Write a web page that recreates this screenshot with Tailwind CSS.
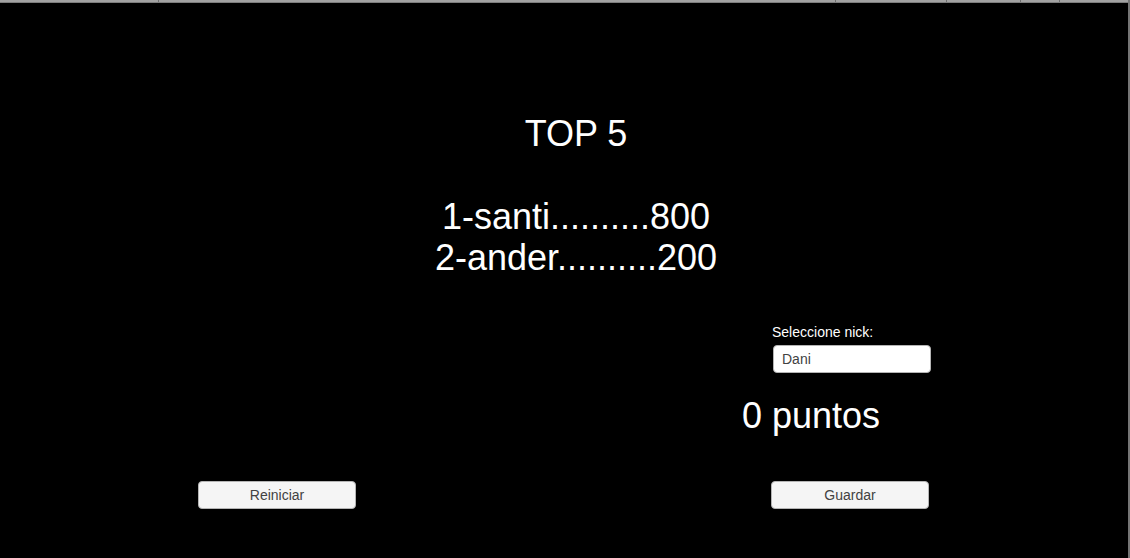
<!DOCTYPE html>
<html lang="es">
<head>
<meta charset="utf-8">
<meta name="viewport" content="width=device-width, initial-scale=1">
<title>Top 5</title>
<script src="https://cdn.jsdelivr.net/npm/@tailwindcss/browser@4"></script>
</head>
<body class="min-h-screen flex flex-col bg-black border-r-2 border-[#757575] text-white text-sm font-['Liberation_Sans',Arial,sans-serif]">
  <!-- Lower edge of the window toolbar -->
  <div class="flex h-[3px] bg-[#a2a2a2] border-b border-[#7d7d7d]">
    <div class="w-[159px] border-r border-[#6e6e6e]"></div>
    <div class="grow border-r border-[#6e6e6e]"></div>
    <div class="w-[111px] border-r border-[#6e6e6e]"></div>
    <div class="w-[74px] border-r border-[#6e6e6e]"></div>
    <div class="w-[39px] border-r border-[#6e6e6e]"></div>
    <div class="w-[68px]"></div>
  </div>

  <main class="flex flex-col pt-[110px]">
    <section class="flex flex-col items-center gap-[42px] pl-6 text-4xl leading-[41px]">
      <h1 class="leading-[41px]">TOP 5</h1>
      <ol class="text-center leading-[41px]">
        <li>1-santi..........800</li>
        <li>2-ander..........200</li>
      </ol>
    </section>

    <form>
      <div class="ml-auto mr-[197px] mt-11 w-[189px] flex flex-col">
        <label for="nick" class="ml-[30px] leading-5">Seleccione nick:</label>
        <input id="nick" type="text" value="Dani" class="ml-[31px] mt-[3px] w-[158px] h-7 rounded-[4px] bg-white border border-[#b4b4b4] px-2 text-[#424242] outline-none">
        <output for="nick" class="mt-[22px] text-4xl leading-[41px] whitespace-nowrap">0 puntos</output>
      </div>
      <div class="mt-[45px] flex justify-between pl-[198px] pr-[199px]">
        <button type="button" class="w-[158px] h-7 rounded-[4px] bg-[#f5f5f5] border border-[#b4b4b4] pb-px text-[#424242]">Reiniciar</button>
        <button type="button" class="w-[158px] h-7 rounded-[4px] bg-[#f5f5f5] border border-[#b4b4b4] pb-px text-[#424242]">Guardar</button>
      </div>
    </form>
  </main>
</body>
</html>
